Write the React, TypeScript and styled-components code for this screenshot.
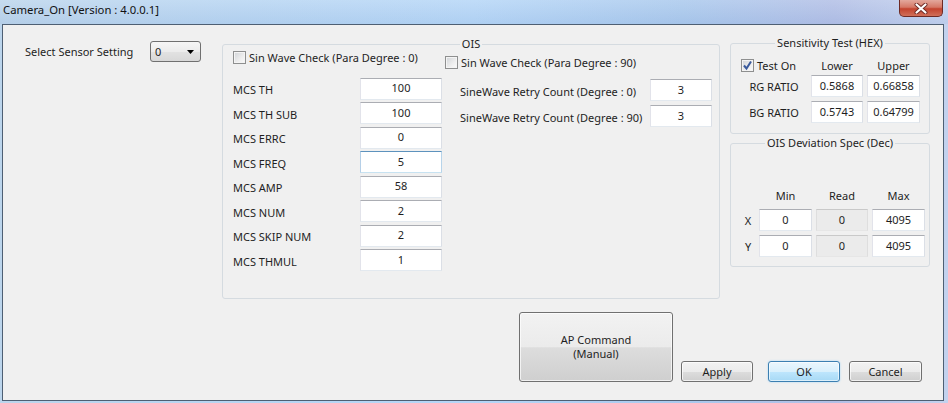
import styled, { createGlobalStyle, css } from "styled-components";

const GlobalStyle = createGlobalStyle`
  html, body {
    margin: 0;
    padding: 0;
  }
  body {
    width: 948px;
    height: 403px;
    overflow: hidden;
    font-family: "Noto Sans", "Liberation Sans", sans-serif;
    font-size: 11px;
    color: #000;
  }
`;

const mcsRows = [
  { label: "MCS TH", value: "100" },
  { label: "MCS TH SUB", value: "100" },
  { label: "MCS ERRC", value: "0" },
  { label: "MCS FREQ", value: "5", focused: true },
  { label: "MCS AMP", value: "58" },
  { label: "MCS NUM", value: "2" },
  { label: "MCS SKIP NUM", value: "2" },
  { label: "MCS THMUL", value: "1" },
];

const retryRows = [
  { label: "SineWave Retry Count (Degree : 0)", value: "3" },
  { label: "SineWave Retry Count (Degree : 90)", value: "3" },
];

function CheckBox({ label, checked = false }: { label: string; checked?: boolean }) {
  return (
    <CheckRow>
      <Box>
        {checked && (
          <svg width="11" height="11" viewBox="0 0 11 11">
            <path d="M2 5.5 L4.5 8.5 L9 1.5" fill="none" stroke="#3a5a9c" strokeWidth="2" />
          </svg>
        )}
      </Box>
      <span>{label}</span>
    </CheckRow>
  );
}

export default function App() {
  return (
    <Window>
      <GlobalStyle />
      <TitleBar>
        <Title>Camera_On [Version : 4.0.0.1]</Title>
        <CloseButton>
          <svg width="16" height="11" viewBox="0 0 16 11">
            <path d="M3.5 1.5 L12.5 9.5 M12.5 1.5 L3.5 9.5" stroke="#6e2a24" strokeWidth="4" strokeLinecap="round" />
            <path d="M3.5 1.5 L12.5 9.5 M12.5 1.5 L3.5 9.5" stroke="#fff" strokeWidth="2.2" strokeLinecap="round" />
          </svg>
        </CloseButton>
      </TitleBar>

      <Client>
        <TopRow>
          <SensorCol>
            <span>Select Sensor Setting</span>
            <Combo>
              <span>0</span>
              <svg width="7" height="4" viewBox="0 0 7 4">
                <polygon points="0,0 7,0 3.5,4" fill="#000" />
              </svg>
            </Combo>
          </SensorCol>

          <Group $width={498} $height={262} $top={1} $left={21}>
            <Legend>OIS</Legend>
            <OisBody>
              <OisPane>
                <CheckBox label="Sin Wave Check (Para Degree : 0)" />
                <McsGrid>
                  {mcsRows.map((r) => (
                    <FieldRow key={r.label}>
                      <Label>{r.label}</Label>
                      <Field $w={82} $focused={r.focused} value={r.value} readOnly />
                    </FieldRow>
                  ))}
                </McsGrid>
              </OisPane>
              <OisPane $right>
                <CheckBox label="Sin Wave Check (Para Degree : 90)" />
                <RetryGrid>
                  {retryRows.map((r) => (
                    <FieldRow key={r.label}>
                      <Label $indent>{r.label}</Label>
                      <Field $w={62} value={r.value} readOnly />
                    </FieldRow>
                  ))}
                </RetryGrid>
              </OisPane>
            </OisBody>
          </Group>

          <RightCol>
            <Group $width={200} $height={98}>
              <Legend>Sensitivity Test (HEX)</Legend>
              <SensGrid>
                <CheckBox label="Test On" checked />
                <Head>Lower</Head>
                <Head>Upper</Head>
                <Head>RG RATIO</Head>
                <Field value="0.5868" readOnly />
                <Field value="0.66858" readOnly />
                <Head>BG RATIO</Head>
                <Field value="0.5743" readOnly />
                <Field value="0.64799" readOnly />
              </SensGrid>
            </Group>

            <Group $width={200} $height={131} $top={2}>
              <Legend>OIS Deviation Spec (Dec)</Legend>
              <DevGrid>
                <span />
                <Head>Min</Head>
                <Head>Read</Head>
                <Head>Max</Head>
                <Head>X</Head>
                <Field value="0" readOnly />
                <Field $disabled value="0" readOnly />
                <Field value="4095" readOnly />
                <Head>Y</Head>
                <Field value="0" readOnly />
                <Field $disabled value="0" readOnly />
                <Field value="4095" readOnly />
              </DevGrid>
            </Group>
          </RightCol>
        </TopRow>

        <ButtonRow>
          <Button $w={154} $h={70} $gap={0}>
            AP Command
            <br />
            (Manual)
          </Button>
          <Button $gap={8}>Apply</Button>
          <Button $gap={15} $primary>
            OK
          </Button>
          <Button $gap={9} $w={73}>
            Cancel
          </Button>
        </ButtonRow>
      </Client>
    </Window>
  );
}

const Window = styled.div`
  width: 948px;
  height: 403px;
  display: flex;
  flex-direction: column;
  background: linear-gradient(
    to right,
    #bcd5ec 0%,
    #b7d5f2 25%,
    #b5d6f7 50%,
    #aac9ed 72%,
    #b2bfe6 88%,
    #c3d2ee 100%
  );
`;

const TitleBar = styled.div`
  height: 24px;
  flex: none;
  display: flex;
  justify-content: space-between;
  align-items: flex-start;
  padding-left: 3px;
  background: linear-gradient(to bottom, rgba(255, 255, 255, 0.15), rgba(120, 150, 200, 0.1));
`;

const Title = styled.span`
  font-size: 11.3px;
  line-height: 20px;
  color: #111;
`;

const CloseButton = styled.div`
  width: 44px;
  height: 17px;
  margin-right: 5px;
  box-sizing: border-box;
  border: 1px solid #6e2a24;
  border-top: none;
  border-radius: 0 0 5px 5px;
  background: linear-gradient(to bottom, #e3a89c 0%, #d57866 45%, #c3432e 55%, #d0705a 100%);
  display: flex;
  align-items: center;
  justify-content: center;
`;

const Client = styled.div`
  flex: 1;
  margin: 0 4px 2px 2px;
  border: 1px solid #4e5f73;
  background: #f0f0f0;
  display: flex;
  flex-direction: column;
`;

const TopRow = styled.div`
  display: flex;
  align-items: flex-start;
  padding: 11px 0 0 22px;
`;

const SensorCol = styled.div`
  width: 176px;
  flex: none;
  margin-top: 5px;
  display: flex;
  align-items: center;
  justify-content: space-between;
  color: #1e1e1e;
`;

const Combo = styled.div`
  width: 51px;
  height: 21px;
  box-sizing: border-box;
  border: 1px solid #707070;
  border-radius: 3px;
  background: linear-gradient(to bottom, #f6f6f6 0%, #ececec 50%, #e2e2e2 51%, #d8d8d8 100%);
  display: flex;
  align-items: center;
  justify-content: space-between;
  padding: 0 6px 0 4px;
`;

const Group = styled.fieldset<{ $width: number; $height: number; $top?: number; $left?: number }>`
  box-sizing: border-box;
  flex: none;
  width: ${(p) => p.$width}px;
  height: ${(p) => p.$height}px;
  margin: ${(p) => p.$top ?? 0}px 0 0 ${(p) => p.$left ?? 0}px;
  padding: 0;
  min-width: 0;
  border: 1px solid #d5dbe0;
  border-radius: 3px;
`;

const Legend = styled.legend`
  margin: 0 auto;
  padding: 0 2px;
  font-size: 11px;
  line-height: 14px;
  color: #1e1e1e;
`;

const OisBody = styled.div`
  display: flex;
  padding-left: 10px;
`;

const OisPane = styled.div<{ $right?: boolean }>`
  display: flex;
  flex-direction: column;
  width: ${(p) => (p.$right ? "267px" : "209px")};
  margin-left: ${(p) => (p.$right ? "3px" : "0")};
  padding-top: ${(p) => (p.$right ? "5px" : "0")};
`;

const CheckRow = styled.label`
  display: flex;
  align-items: center;
  gap: 3px;
  height: 13px;
  color: #1e1e1e;
  white-space: nowrap;
`;

const Box = styled.span`
  width: 13px;
  height: 13px;
  box-sizing: border-box;
  border: 1px solid #8e8f8f;
  background: linear-gradient(135deg, #d0d3d7 0%, #eeeeee 60%, #fbfbfb 100%);
  box-shadow: inset 0 0 0 1px #f4f4f4;
  display: flex;
  align-items: center;
  justify-content: center;
  flex: none;
`;

const McsGrid = styled.div`
  display: grid;
  row-gap: 2.5px;
  margin-top: 13.5px;
`;

const RetryGrid = styled.div`
  display: grid;
  row-gap: 4px;
  margin-top: 10px;
`;

const FieldRow = styled.div`
  display: flex;
  align-items: center;
  justify-content: space-between;
`;

const Label = styled.span<{ $indent?: boolean }>`
  padding-left: ${(p) => (p.$indent ? "15px" : "0")};
  padding-top: 2px;
  color: #1e1e1e;
  white-space: nowrap;
`;

const Field = styled.input<{ $w?: number; $focused?: boolean; $disabled?: boolean }>`
  box-sizing: border-box;
  width: ${(p) => (p.$w ? `${p.$w}px` : "100%")};
  height: 22px;
  margin: 0;
  padding: 0 0 2px;
  border: 1px solid;
  border-color: #abadb3 #dbdfe6 #e3e9ef #e2e3ea;
  background: #fff;
  font: inherit;
  font-size: 11px;
  color: #1e1e1e;
  text-align: center;
  outline: none;
  ${(p) =>
    p.$focused &&
    css`
      border-color: #5d92bd #b7d4ea #c7e2f1 #b5cfe7;
    `}
  ${(p) =>
    p.$disabled &&
    css`
      background: #ebebeb;
      border-color: #c9c9c9 #dedede #e6e6e6 #dedede;
    `}
`;

const RightCol = styled.div`
  display: flex;
  flex-direction: column;
  flex: none;
  margin-left: 10px;
`;

const SensGrid = styled.div`
  display: grid;
  grid-template-columns: 66px 52px 53px;
  grid-template-rows: 12px 22px 22px;
  column-gap: 4px;
  row-gap: 4px;
  align-items: center;
  padding: 9px 0 0 10px;
`;

const Head = styled.span`
  text-align: center;
  color: #1e1e1e;
  white-space: nowrap;
`;

const DevGrid = styled.div`
  display: grid;
  grid-template-columns: 14px 53px 52px 53px;
  grid-template-rows: 20px 22px 22px;
  column-gap: 4px;
  row-gap: 4px;
  align-items: center;
  padding: 35px 0 0 10px;
`;

const ButtonRow = styled.div`
  display: flex;
  align-items: flex-end;
  padding: 13px 0 0 516px;
`;

const Button = styled.div<{ $w?: number; $h?: number; $gap: number; $primary?: boolean }>`
  box-sizing: border-box;
  width: ${(p) => p.$w ?? 72}px;
  height: ${(p) => p.$h ?? 21}px;
  margin-left: ${(p) => p.$gap}px;
  border: 1px solid #707070;
  border-radius: 3px;
  background: linear-gradient(to bottom, #f2f2f2 0%, #ebebeb 50%, #dddddd 51%, #cfcfcf 100%);
  box-shadow: inset 0 0 0 1px rgba(255, 255, 255, 0.7);
  display: flex;
  align-items: center;
  justify-content: center;
  text-align: center;
  line-height: 14px;
  color: #1e1e1e;
  ${(p) =>
    p.$primary &&
    css`
      border-color: #3c7fb1;
      background: linear-gradient(to bottom, #eaf6fd 0%, #d9f0fc 50%, #bee6fd 51%, #a7d9f5 100%);
      box-shadow: inset 0 0 0 1px rgba(255, 255, 255, 0.6), 0 0 2px #9fd3f7;
    `}
`;
